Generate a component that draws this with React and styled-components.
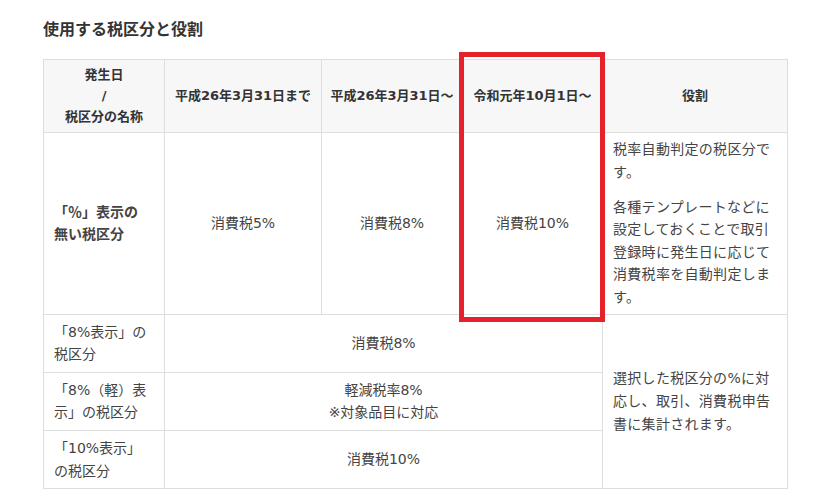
import React from "react";
import styled, { createGlobalStyle } from "styled-components";

const Global = createGlobalStyle`
  html, body { margin: 0; padding: 0; background: #fff; }
  body { font-family: "DejaVu Sans", "Noto Sans CJK JP", sans-serif; color: #333; }
`;

const Page = styled.div`
  width: 832px;
  height: 502px;
  box-sizing: border-box;
  padding: 16px 0 0 43px;
`;

const Title = styled.h2`
  margin: 0 0 19px;
  font-family: "Noto Sans CJK JP", sans-serif;
  font-size: 16px;
  line-height: 24px;
  font-weight: bold;
  color: #333;
`;

const TableWrap = styled.div`
  position: relative;
  width: 744px;
`;

const Table = styled.table`
  width: 744px;
  border-collapse: collapse;
  table-layout: fixed;
`;

const Th = styled.th`
  background: #f7f7f7;
  border: 1px solid #dedede;
  font-size: 13px;
  line-height: 20.8px;
  font-weight: bold;
  color: #333;
  padding: 5px 6px;
  text-align: center;
  vertical-align: middle;
`;

const Td = styled.td`
  border: 1px solid #dedede;
  font-size: 14px;
  line-height: 22.6px;
  color: #444;
  padding: ${(p) => (p.$tall ? "5px 10px" : "6px 10px")};
  text-align: ${(p) => (p.$align === "left" ? "left" : "center")};
  font-weight: ${(p) => (p.$bold ? "bold" : "normal")};
  vertical-align: middle;
  letter-spacing: ${(p) => (p.$spaced ? "0.3px" : "0")};
`;

const Para = styled.p`
  margin: 0;
  & + & { margin-top: 12px; }
`;

const Highlight = styled.div`
  position: absolute;
  left: 416px;
  top: -7px;
  width: 146px;
  height: 270px;
  box-sizing: border-box;
  border: 5px solid #e5222a;
  pointer-events: none;
`;

export default function App() {
  return (
    <>
      <Global />
      <Page>
        <Title>使用する税区分と役割</Title>
        <TableWrap>
          <Table>
            <colgroup>
              <col style={{ width: 121 }} />
              <col style={{ width: 157 }} />
              <col style={{ width: 141 }} />
              <col style={{ width: 140 }} />
              <col style={{ width: 185 }} />
            </colgroup>
            <thead>
              <tr>
                <Th>
                  発生日
                  <br />/<br />
                  税区分の名称
                </Th>
                <Th>平成26年3月31日まで</Th>
                <Th>平成26年3月31日～</Th>
                <Th>令和元年10月1日～</Th>
                <Th>役割</Th>
              </tr>
            </thead>
            <tbody>
              <tr>
                <Td $align="left" $bold $tall>
                  「％」表示の
                  <br />
                  無い税区分
                </Td>
                <Td $tall>消費税5%</Td>
                <Td $tall>消費税8%</Td>
                <Td $tall>消費税10%</Td>
                <Td $align="left" $spaced $tall>
                  <Para>税率自動判定の税区分です。</Para>
                  <Para>各種テンプレートなどに設定しておくことで取引登録時に発生日に応じて消費税率を自動判定します。</Para>
                </Td>
              </tr>
              <tr>
                <Td $align="left">
                  「8%表示」の
                  <br />
                  税区分
                </Td>
                <Td colSpan={3}>消費税8%</Td>
                <Td $align="left" $spaced rowSpan={3}>
                  選択した税区分の%に対応し、取引、消費税申告書に集計されます。
                </Td>
              </tr>
              <tr>
                <Td $align="left">
                  「8%（軽）表
                  <br />
                  示」の税区分
                </Td>
                <Td colSpan={3}>
                  軽減税率8%
                  <br />
                  ※対象品目に対応
                </Td>
              </tr>
              <tr>
                <Td $align="left">
                  「10%表示」
                  <br />
                  の税区分
                </Td>
                <Td colSpan={3}>消費税10%</Td>
              </tr>
            </tbody>
          </Table>
          <Highlight />
        </TableWrap>
      </Page>
    </>
  );
}
